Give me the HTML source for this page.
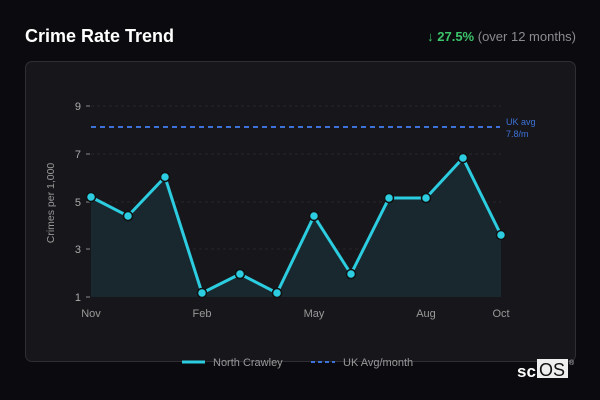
<!DOCTYPE html>
<html><head><style>
body{margin:0;width:600px;height:400px;background:#0b0b0f;font-family:"Liberation Sans",sans-serif;overflow:hidden;position:relative}
.t{position:absolute;left:25px;top:26px;color:#fff;font-weight:bold;font-size:18px}
.s{position:absolute;right:24px;top:29px;font-size:13px;color:#8a8a90}
.s b{color:#3cc46a}
.card{position:absolute;left:25px;top:61px;width:549px;height:299px;background:#17171b;border:1px solid #2e2e34;border-radius:7px}
svg{position:absolute;left:0;top:0}
</style></head><body>
<div class="t">Crime Rate Trend</div>
<div class="s"><b>↓ 27.5%</b> (over 12 months)</div>
<div class="card"></div>
<svg width="600" height="400">
<g stroke="#26262b" stroke-dasharray="3,3" stroke-width="1">
<line x1="91" y1="106" x2="501" y2="106"/><line x1="91" y1="154" x2="501" y2="154"/><line x1="91" y1="202" x2="501" y2="202"/><line x1="91" y1="249" x2="501" y2="249"/>
</g>
<g stroke="#888" stroke-width="1"><line x1="86" y1="106" x2="90" y2="106"/><line x1="86" y1="154" x2="90" y2="154"/><line x1="86" y1="202" x2="90" y2="202"/><line x1="86" y1="249" x2="90" y2="249"/><line x1="86" y1="297" x2="90" y2="297"/></g>
<g fill="#aaa" font-size="11" text-anchor="end" font-family="Liberation Sans"><text x="81" y="110">9</text><text x="81" y="158">7</text><text x="81" y="206">5</text><text x="81" y="253">3</text><text x="81" y="301">1</text></g>
<text transform="translate(54,203) rotate(-90)" fill="#999" font-size="10.5" text-anchor="middle" font-family="Liberation Sans">Crimes per 1,000</text>
<line x1="91" y1="127" x2="500" y2="127" stroke="#3d72d8" stroke-width="2" stroke-dasharray="5,4"/>
<text x="506" y="125" fill="#3d72d8" font-size="9">UK avg</text><text x="506" y="137" fill="#3d72d8" font-size="9">7.8/m</text>
<path d="M91,197L128,216L165,177L202,293L240,274L277,293L314,216L351,274L389,198L426,198L463,158L501,235L501,297L91,297Z" fill="#18282e"/>
<path d="M91,197L128,216L165,177L202,293L240,274L277,293L314,216L351,274L389,198L426,198L463,158L501,235" fill="none" stroke="#2ccde0" stroke-width="3" stroke-linejoin="round"/>
<g fill="#2ccde0" stroke="#111" stroke-width="1.5">
<circle cx="91" cy="197" r="4.5"/><circle cx="128" cy="216" r="4.5"/><circle cx="165" cy="177" r="4.5"/><circle cx="202" cy="293" r="4.5"/><circle cx="240" cy="274" r="4.5"/><circle cx="277" cy="293" r="4.5"/><circle cx="314" cy="216" r="4.5"/><circle cx="351" cy="274" r="4.5"/><circle cx="389" cy="198" r="4.5"/><circle cx="426" cy="198" r="4.5"/><circle cx="463" cy="158" r="4.5"/><circle cx="501" cy="235" r="4.5"/>
</g>
<g fill="#999" font-size="11" text-anchor="middle"><text x="91" y="317">Nov</text><text x="202" y="317">Feb</text><text x="314" y="317">May</text><text x="426" y="317">Aug</text><text x="501" y="317">Oct</text></g>
<line x1="182" y1="362" x2="205" y2="362" stroke="#2ccde0" stroke-width="3"/>
<text x="213" y="366" fill="#999" font-size="11">North Crawley</text>
<line x1="311" y1="362" x2="335" y2="362" stroke="#3d72d8" stroke-width="2" stroke-dasharray="4,3"/>
<text x="343" y="366" fill="#999" font-size="11">UK Avg/month</text>
<text x="517" y="377" fill="#fff" font-size="17" font-weight="bold">sc</text>
<rect x="537" y="359" width="31" height="19" fill="#eee"/>
<text x="539" y="376" fill="#111" font-size="18">OS</text>
<text x="569" y="365" fill="#ccc" font-size="7">®</text>
</svg>
</body></html>
